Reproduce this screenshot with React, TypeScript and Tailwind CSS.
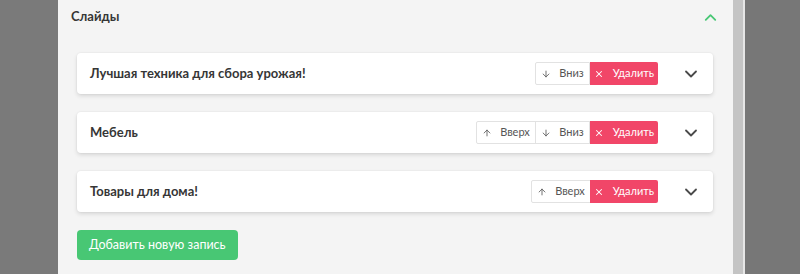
import React from 'react';
import { ChevronDown, ChevronUp, ArrowUp, ArrowDown, X } from 'lucide-react';

type Slide = { id: number; title: string; up: boolean; down: boolean };

const slides: Slide[] = [
  { id: 1, title: 'Лучшая техника для сбора урожая!', up: false, down: true },
  { id: 2, title: 'Мебель', up: true, down: true },
  { id: 3, title: 'Товары для дома!', up: true, down: false },
];

const SlideCard: React.FC<{ slide: Slide }> = ({ slide }) => (
  <div className="flex items-center h-[41px] bg-white rounded-[4px] shadow-[0_2px_4px_rgba(10,10,10,0.12),0_0_0_1px_rgba(10,10,10,0.02)] pl-[13px] pr-[12px]">
    <div className="flex-1 text-[13px] font-bold text-[#363636]">{slide.title}</div>
    <div className="flex h-[23px] text-[11px]">
      {slide.up && (
        <button className="flex items-center justify-center gap-[8px] w-[60px] bg-white border border-[#e2e2e2] text-[#555] rounded-l-[2px] -mr-px">
          <ArrowUp size={10} strokeWidth={2} />
          Вверх
        </button>
      )}
      {slide.down && (
        <button className={`flex items-center justify-center gap-[8px] w-[55px] bg-white border border-[#e2e2e2] text-[#555] ${slide.up ? '' : 'rounded-l-[2px]'}`}>
          <ArrowDown size={10} strokeWidth={2} />
          Вниз
        </button>
      )}
      <button className="flex items-center justify-center gap-[9px] w-[68px] bg-[#f14668] text-white rounded-r-[2px]">
        <X size={10} strokeWidth={2.5} />
        Удалить
      </button>
    </div>
    <ChevronDown size={20} strokeWidth={2.2} className="ml-[23px] text-[#4a4a4a]" />
  </div>
);

export default function App() {
  return (
    <div className="flex w-[800px] h-[274px] overflow-hidden bg-[#7a7a7a] font-['Lato',sans-serif]">
      <div className="w-[58px] shrink-0 bg-[#7a7a7a]" />
      <div className="w-[675px] shrink-0 bg-[#f4f4f4] px-[13px]">
        <div className="flex items-center justify-between h-[34px]">
          <span className="text-[13px] font-bold text-[#363636]">Слайды</span>
          <ChevronUp size={19} strokeWidth={2.3} className="text-[#48c774]" />
        </div>
        <div className="flex flex-col gap-[18px] pl-[6px] pr-[7px] pt-[19px]">
          {slides.map(s => (
            <SlideCard key={s.id} slide={s} />
          ))}
        </div>
        <div className="pl-[6px] pt-[18px]">
          <button className="h-[30px] px-[12px] bg-[#48c774] text-white text-[12.5px] rounded-[4px]">
            Добавить новую запись
          </button>
        </div>
      </div>
      <div className="w-[10px] shrink-0 bg-[#c4c4c4]" />
      <div className="w-[2px] shrink-0 bg-[#e6e6e6]" />
      <div className="flex-1 bg-[#777777]" />
    </div>
  );
}
